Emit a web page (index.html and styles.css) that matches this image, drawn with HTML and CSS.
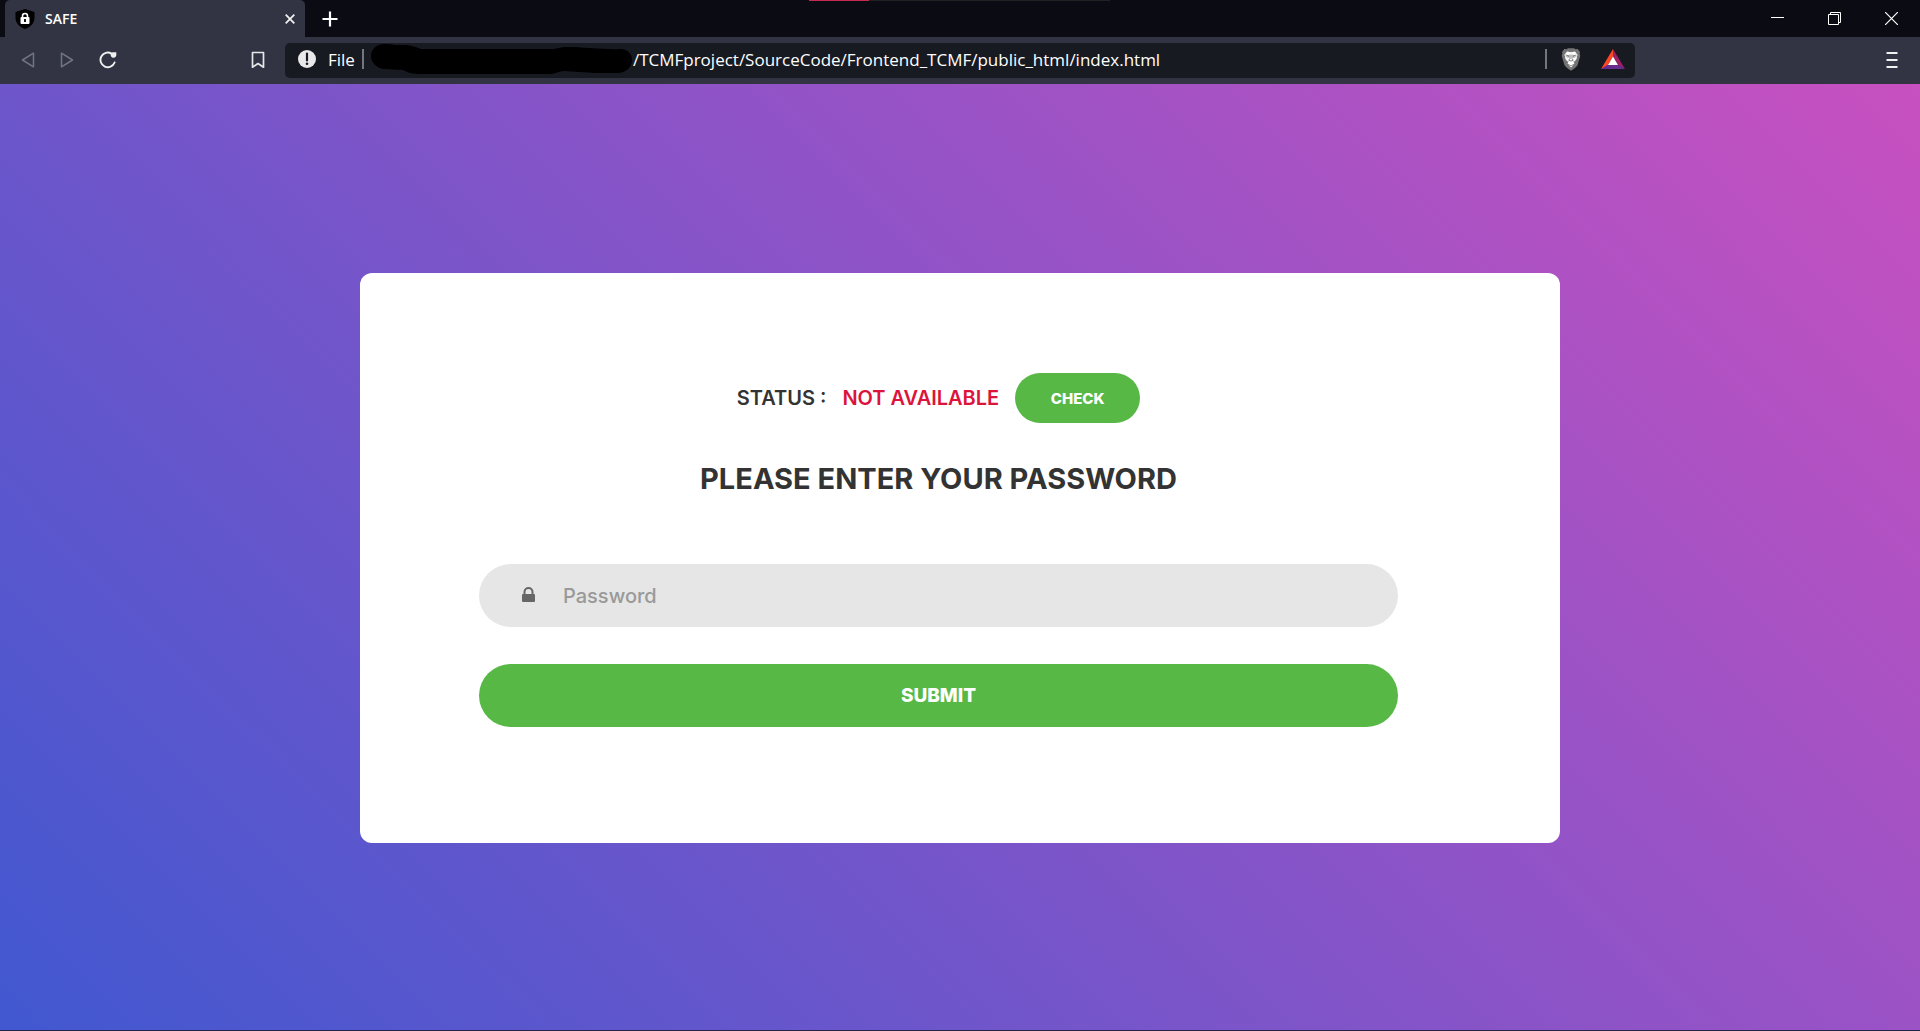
FILE: index.html
```html
<!DOCTYPE html>
<html lang="en">
<head>
<meta charset="utf-8">
<meta name="viewport" content="width=device-width, initial-scale=1">
<title>SAFE</title>
<link rel="stylesheet" href="styles.css">
</head>
<body>
<header class="browser">
  <div class="tab-strip">
    <div class="tab">
      <svg class="icon" width="20" height="20" viewBox="0 0 20 20" aria-hidden="true">
        <path d="M10 0l9.500 3v6c0 5-4 9-9.500 11C4.500 18 .5 14 .5 9V3z" fill="#000"/>
        <rect x="5.500" y="8" width="9" height="7" rx="1" fill="#fff"/>
        <path d="M7.500 8.500V7a2.500 2.500 0 0 1 5 0v1.500" fill="none" stroke="#fff" stroke-width="1.600"/>
        <path d="M10 10v3" stroke="#000" stroke-width="1.800"/>
      </svg>
      <span class="tab-title">SAFE</span>
      <button class="icon-button" type="button" aria-label="Close tab">
        <svg width="10" height="10" viewBox="0 0 10 10"><path d="M.7.7l8.600 8.600M9.300.7L.7 9.300" stroke="#f0f0f0" stroke-width="1.800"/></svg>
      </button>
    </div>
    <button class="icon-button new-tab" type="button" aria-label="New tab">
      <svg width="16" height="16" viewBox="0 0 16 16"><path d="M8 .5v15M.5 8h15" stroke="#fff" stroke-width="2.200"/></svg>
    </button>
    <div class="window-controls">
      <button class="icon-button" type="button" aria-label="Minimize">
        <svg width="13" height="13" viewBox="0 0 13 13"><path d="M0 5.500h13" stroke="#fff"/></svg>
      </button>
      <button class="icon-button" type="button" aria-label="Restore">
        <svg width="13" height="13" viewBox="0 0 13 13"><path d="M.5 2.500h10v10H.5zM2.500 2.500v-2h10v10h-2" fill="none" stroke="#fff"/></svg>
      </button>
      <button class="icon-button" type="button" aria-label="Close window">
        <svg width="13" height="13" viewBox="0 0 13 13"><path d="M0 0l13 13M13 0L0 13" stroke="#fff" stroke-width="1.200"/></svg>
      </button>
    </div>
    <div class="top-progress"></div>
  </div>
  <div class="toolbar">
    <nav class="history">
      <button class="icon-button" type="button" aria-label="Back">
        <svg width="14" height="18" viewBox="0 0 14 18"><path d="M12.500 2.200v13.600L1.500 9z" fill="none" stroke="#72747f" stroke-width="1.500" stroke-linejoin="round"/></svg>
      </button>
      <button class="icon-button" type="button" aria-label="Forward">
        <svg width="14" height="18" viewBox="0 0 14 18"><path d="M1.500 2.200v13.600l11-6.800z" fill="none" stroke="#72747f" stroke-width="1.500" stroke-linejoin="round"/></svg>
      </button>
      <button class="icon-button" type="button" aria-label="Reload">
        <svg width="18" height="18" viewBox="0 0 18 18"><path d="M12.500 2.600A7.300 7.300 0 1 0 15.600 11.500" fill="none" stroke="#f0f0f0" stroke-width="1.900" stroke-linecap="round"/><path d="M11.500 3.500a2.700 2.700 0 0 1 2.500-2.200h3.300v3.200a2.900 2.900 0 0 1-5.200 1z" fill="#f0f0f0"/></svg>
      </button>
    </nav>
    <button class="icon-button bookmark" type="button" aria-label="Bookmark this page">
      <svg width="14" height="18" viewBox="0 0 14 18"><path d="M1.500 1.500h11v14.700L7 12.500l-5.500 3.700z" fill="none" stroke="#e8e8ea" stroke-width="1.700" stroke-linejoin="round"/></svg>
    </button>
    <div class="address">
      <svg class="icon" width="18" height="18" viewBox="0 0 18 18" aria-hidden="true"><circle cx="9" cy="9" r="9" fill="#e9e9ea"/><path d="M9 3.500v7" stroke="#171a21" stroke-width="2.200" stroke-linecap="round"/><circle cx="9" cy="13.800" r="1.300" fill="#171a21"/></svg>
      <span class="scheme">File</span>
      <span class="divider"></span>
      <svg class="redaction" width="262" height="32" viewBox="0 0 262 32" aria-hidden="true"><path d="M13 1C5 1 0 7 0 13s5 12 13 13l19 1c5 3 11 4 17 4h130c6 0 9-3 14-3l31 2h22c9 0 15-6 15-13s-5-11-12-11c-14 1-38-2-52-2-9 0-10 2-17 2H50c-5-2-8-3-14-4H24c-4-1-7-1-11-1z" fill="#000"/></svg>
      <span class="path">/TCMFproject/SourceCode/Frontend_TCMF/public_html/index.html</span>
      <div class="address-actions">
        <span class="divider"></span>
        <button class="icon-button" type="button" aria-label="Brave Shields">
          <svg width="20" height="23" viewBox="0 0 20 23"><path d="M5.500 1.200L7 .3h6l1.500.9 2.200-.1 2.300 3-.4 1.700.7 2-2.800 9.500c-1.500 2-4 4-6.500 5.400-2.500-1.400-5-3.400-6.500-5.400L.7 7.800l.7-2L1 4.100l2.300-3z" fill="#747475"/><path d="M6 3.500l4 .7 4-.7 2.700 3.500-1 1.400.2 1.800-2 3-1.600.4 1.200 1.800L10 17.500l-3.500-2.100 1.200-1.800-1.600-.4-2-3 .2-1.800-1-1.400z" fill="#fff"/><path d="M4.500 7l3.500.8-.5 1.400-2-.5M15.500 7l-3.500.8.5 1.400 2-.5M9 6.500v4.200l-1.300 1.500L10 13l2.300-.8-1.300-1.500V6.500" fill="none" stroke="#747475" stroke-width=".9"/><path d="M7.200 16.600l2.800 1.600 2.800-1.600-2.800 3z" fill="#fff"/></svg>
        </button>
        <button class="icon-button" type="button" aria-label="Brave Rewards">
          <svg width="24" height="20" viewBox="0 0 24 20"><path d="M12 0v7.500L6.500 16.500 0 20z" fill="#ff4724"/><path d="M12 0l12 20-6.500-3.500L12 7.500z" fill="#9e1f63"/><path d="M0 20l6.500-4h11L24 20z" fill="#662d91"/><path d="M12 7.500l5 8.500H7z" fill="#fff"/></svg>
        </button>
      </div>
    </div>
    <button class="icon-button menu" type="button" aria-label="Menu">
      <svg width="12" height="18" viewBox="0 0 12 18"><path d="M.5 2h11M.5 9h11M.5 16h11" stroke="#f0f0f0" stroke-width="2"/></svg>
    </button>
  </div>
</header>
<main class="page">
  <section class="card">
    <form class="login">
      <div class="status">
        <span>STATUS :</span>
        <span class="status-value">NOT AVAILABLE</span>
        <button class="button button-small" type="button">CHECK</button>
      </div>
      <h1 class="title"><label for="password">PLEASE ENTER YOUR PASSWORD</label></h1>
      <div class="field">
        <svg class="icon" width="14" height="18" viewBox="0 0 14 18" aria-hidden="true"><rect x="0" y="7" width="13" height="8" rx="1" fill="#666"/><path d="M2.500 8V5a4 4 0 0 1 8 0v3" fill="none" stroke="#666" stroke-width="2"/></svg>
        <input class="password" id="password" type="password" placeholder="Password">
      </div>
      <button class="button button-wide" type="submit">SUBMIT</button>
    </form>
  </section>
</main>
<footer class="screen-edge"></footer>
</body>
</html>
```
FILE: styles.css
```css
* {
  box-sizing: border-box;
}

body {
  margin: 0;
  min-height: 100vh;
  display: flex;
  flex-direction: column;
  font-family: "Open Sans", "Noto Sans", sans-serif;
}

button {
  font: inherit;
  border: 0;
  padding: 0;
  cursor: pointer;
}

svg {
  display: block;
  flex: none;
}

.icon-button {
  background: none;
  display: flex;
  align-items: center;
  justify-content: center;
}

/* Browser frame */
.browser {
  color: #fff;
}

.tab-strip {
  position: relative;
  display: flex;
  height: 37px;
  padding-left: 5px;
  background: #0b0b14;
}

.tab {
  display: flex;
  align-items: center;
  gap: 10px;
  width: 300px;
  padding: 0 10px;
  border-radius: 5px 5px 0 0;
  background: #323443;
}

.tab-title {
  flex: 1;
  font-size: 14px;
  font-weight: 600;
}

.new-tab {
  margin-left: 17px;
}

.window-controls {
  display: flex;
  gap: 44px;
  margin-left: auto;
  padding-right: 22px;
}

.top-progress {
  position: absolute;
  top: 0;
  left: 809px;
  width: 301px;
  height: 1px;
  background: linear-gradient(90deg, #c62a4f 20%, #222 20%);
}

.toolbar {
  display: flex;
  align-items: center;
  height: 47px;
  padding: 0 22px 1px 21px;
  background: #323443;
}

.history {
  display: flex;
  gap: 25px;
}

.bookmark {
  margin-left: 134px;
}

.address {
  display: flex;
  align-items: center;
  flex: 1;
  height: 35px;
  min-width: 0;
  margin-left: 20px;
  padding: 0 10px 2px 13px;
  border-radius: 5px;
  background: #171a21;
  font-size: 17px;
}

.scheme {
  margin-left: 12px;
}

.divider {
  width: 2px;
  height: 20px;
  margin-left: 7px;
  background: #74767c;
}

.redaction {
  margin-left: 7px;
}

.address-actions {
  display: flex;
  align-items: center;
  gap: 14px;
  margin-left: auto;
}

.address-actions .icon-button:last-child {
  margin-left: 6px;
}

.menu {
  margin-left: 251px;
}

/* Login page */
.page {
  flex: 1;
  display: flex;
  align-items: center;
  justify-content: center;
  padding: 18px 16px 16px;
  background: linear-gradient(-135deg, #c850c0, #4158d0);
}

.card {
  width: 100%;
  max-width: 1200px;
  padding: 100px 162px 116px 119px;
  border-radius: 12px;
  background: #fff;
}

.login {
  display: flex;
  flex-direction: column;
  color: #333;
  font-family: Inter, "Open Sans", sans-serif;
}

.status {
  display: flex;
  align-items: center;
  justify-content: center;
  gap: 16px;
  font-size: 20px;
  font-weight: 600;
}

.status-value {
  color: #dc143c;
}

.title {
  margin: 37px 0 67px;
  font-size: 29px;
  line-height: 37px;
  font-weight: 700;
  text-align: center;
}

.button {
  border-radius: 32px;
  background: #57b846;
  color: #fff;
  font-weight: 800;
}

.button-small {
  width: 125px;
  height: 50px;
  font-size: 15px;
}

.button-wide {
  height: 63px;
  margin-top: 37px;
  font-size: 19px;
}

.field {
  display: flex;
  align-items: center;
  height: 63px;
  padding: 0 43px;
  border-radius: 32px;
  background: #e6e6e6;
}

.password {
  flex: 1;
  min-width: 0;
  margin-left: 27px;
  padding: 0;
  border: 0;
  outline: 0;
  background: none;
  color: #666;
  font-family: inherit;
  font-size: 20px;
  font-weight: 500;
}

.password::placeholder {
  color: #999;
}

.screen-edge {
  height: 1px;
  background: #24244a;
}
```
